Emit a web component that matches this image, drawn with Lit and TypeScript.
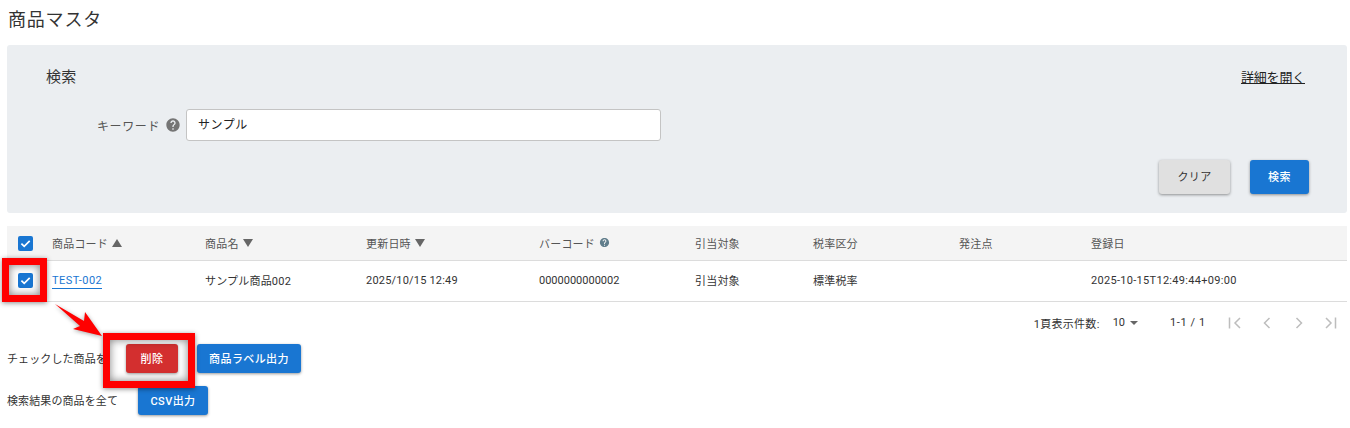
import { LitElement, html, css, svg } from "lit";
import { customElement } from "lit/decorators.js";

const help = (size: number, color: string) => html`<svg width=${size} height=${size} viewBox="0 0 24 24" style="flex:none"><path fill=${color} d="M12 2C6.48 2 2 6.48 2 12s4.48 10 10 10 10-4.48 10-10S17.52 2 12 2zm1 17h-2v-2h2v2zm2.07-7.75l-.9.92C13.45 12.9 13 13.5 13 15h-2v-.5c0-1.1.45-2.1 1.17-2.83l1.24-1.26c.37-.36.59-.86.59-1.41 0-1.1-.9-2-2-2s-2 .9-2 2H8c0-2.21 1.79-4 4-4s4 1.79 4 4c0 .88-.36 1.68-.93 2.25z"/></svg>`;

const check = html`<span class="cb"><svg width="15" height="15" viewBox="0 0 15 15"><path d="M3.4 7.600 6.200 10.300 11.700 4.900" fill="none" stroke="#fff" stroke-width="1.7"/></svg></span>`;

const up = html`<svg class="sort" width="10" height="8" viewBox="0 0 10 8"><path d="M5 0 10 8H0z"/></svg>`;
const down = html`<svg class="sort" width="10" height="8" viewBox="0 0 10 8"><path d="M0 0H10L5 8z"/></svg>`;

const pager = (d: string) => svg`<svg width="14" height="14" viewBox="0 0 14 14"><path d=${d} fill="none" stroke="#bdbdbd" stroke-width="1.5"/></svg>`;

@customElement("app-root")
export class AppRoot extends LitElement {
  static styles = css`
    :host {
      display: block;
      position: relative;
      width: 1350px;
      height: 428px;
      overflow: hidden;
      background: #fff;
      color: #333;
      font-family: Roboto, "Noto Sans CJK JP", sans-serif;
      font-size: 11px;
      letter-spacing: 0.2px;
    }
    .page { padding: 0 3px 0 7px; display: flex; flex-direction: column; }
    h1 { margin: 0; height: 45px; padding-left: 1px; font-size: 18px; font-weight: 400; line-height: 39px; letter-spacing: 0.8px; color: #333; }
    .panel { height: 168px; box-sizing: border-box; background: #ebeef1; border-radius: 3px; padding: 18px 38px 18px 39px; display: flex; flex-direction: column; }
    .panel-top { display: flex; justify-content: space-between; height: 24px; align-items: center; }
    .panel-top h2 { margin: 0; font-size: 15px; font-weight: 400; letter-spacing: 0.3px; }
    .open { font-size: 13px; letter-spacing: -0.2px; color: #222; text-decoration: underline; margin-right: 4px; margin-top: 3px; }
    .field { display: flex; align-items: center; margin-top: 22px; padding-left: 51px; }
    .field label { font-size: 12px; color: #555; letter-spacing: 0.6px; display: flex; align-items: center; gap: 5px; }
    .input { width: 475px; height: 32px; box-sizing: border-box; margin-left: 5px; background: #fff; border: 1px solid #c4c4c4; border-radius: 3px; padding-left: 11px; font-size: 12px; line-height: 31px; color: #222; letter-spacing: 0.5px; }
    .actions { display: flex; justify-content: flex-end; gap: 20px; margin-top: 19px; }
    .btn { box-sizing: border-box; height: 29px; display: inline-flex; align-items: center; justify-content: center; border-radius: 3px; background: #1976d2; color: #fff; font-size: 11px; font-weight: 500; letter-spacing: 0.4px; box-shadow: 0 1px 3px rgba(0,0,0,.4); padding-bottom: 1px; }
    .actions .btn { height: 34px; padding-bottom: 2px; }
    .btn.clear { background: #e0e0e0; color: #333; width: 71px; font-weight: 400; }
    .btn.search { width: 59px; }
    .btn.del { background: #d32f2f; width: 52px; }
    .btn.label { width: 104px; }
    .btn.csv { width: 70px; }
    .row { display: grid; grid-template-columns: 45px 153px 161px 173px 156px 118px 146px 132px 1fr; align-items: center; }
    .head { margin-top: 13px; height: 35px; background: #f4f4f4; border-bottom: 1px solid #dcdcdc; color: #555; padding-bottom: 1px; box-sizing: border-box; }
    .body { height: 41px; box-sizing: border-box; border-bottom: 1px solid #dcdcdc; color: #333; padding-bottom: 2px; }
    .chk { padding-left: 11px; display: flex; padding-top: 1px; }
    .cb { width: 15px; height: 15px; display: block; border-radius: 2px; background: #1976d2; }
    .cb svg { display: block; }
    .hc { display: flex; align-items: center; gap: 4px; }
    .sort { fill: #666; }
    .link { color: #1976d2; text-decoration: none; border-bottom: 1px solid #1976d2; justify-self: start; line-height: 14px; letter-spacing: 0.5px; margin-top: 3px; }
    .code { letter-spacing: 0; }
    .stamp { letter-spacing: 0.3px; }
    .pagin { display: flex; justify-content: flex-end; align-items: center; height: 41px; padding-right: 9px; color: #333; font-size: 11px; letter-spacing: 0; }
    .per { letter-spacing: 0.3px; }
    .size { margin-left: 13px; display: flex; align-items: center; gap: 5px; }
    .caret { width: 0; height: 0; border-left: 4px solid transparent; border-right: 4px solid transparent; border-top: 4px solid #666; }
    .range { margin-left: 32px; width: 58px; letter-spacing: 0.6px; }
    .icons { display: flex; gap: 18px; }
    .bulk { display: flex; align-items: center; height: 29px; }
    .bulk.a { margin-top: 1px; }
    .bulk.b { margin-top: 13px; }
    .bulk .txt { letter-spacing: 0.1px; margin-top: -1px; }
    .bulk.a .txt { width: 119px; }
    .bulk.b .txt { width: 131px; }
    .bulk .btn.label { margin-left: 19px; }
    .mark { position: absolute; box-sizing: border-box; border: 7px solid #f00; box-shadow: 0 1px 5px rgba(0,0,0,.45), inset 0 0 8px rgba(0,0,0,.5); }
    .m1 { left: 2px; top: 258px; width: 45px; height: 44px; }
    .m2 { left: 103px; top: 333px; width: 92px; height: 55px; }
    .arrow { position: absolute; left: 50px; top: 300px; filter: drop-shadow(0 1px 2px rgba(0,0,0,.35)); }
  `;

  render() {
    return html`
      <div class="page">
        <h1>商品マスタ</h1>
        <section class="panel">
          <div class="panel-top"><h2>検索</h2><span class="open">詳細を開く</span></div>
          <div class="field">
            <label>キーワード ${help(16, "#757575")}</label>
            <div class="input">サンプル</div>
          </div>
          <div class="actions">
            <span class="btn clear">クリア</span>
            <span class="btn search">検索</span>
          </div>
        </section>
        <div class="row head">
          <div class="chk">${check}</div>
          <div class="hc">商品コード ${up}</div>
          <div class="hc">商品名 ${down}</div>
          <div class="hc">更新日時 ${down}</div>
          <div class="hc">バーコード ${help(11, "#607d8b")}</div>
          <div>引当対象</div>
          <div>税率区分</div>
          <div>発注点</div>
          <div>登録日</div>
        </div>
        <div class="row body">
          <div class="chk">${check}</div>
          <a class="link">TEST-002</a>
          <div>サンプル商品002</div>
          <div>2025/10/15 12:49</div>
          <div class="code">0000000000002</div>
          <div>引当対象</div>
          <div>標準税率</div>
          <div></div>
          <div class="stamp">2025-10-15T12:49:44+09:00</div>
        </div>
        <div class="pagin">
          <span class="per">1頁表示件数:</span>
          <span class="size">10 <i class="caret"></i></span>
          <span class="range">1-1 / 1</span>
          <span class="icons">
            ${pager("M1.500 1.500v11M12 2 7 7l5 5")}
            ${pager("M9.500 2 4.500 7l5 5")}
            ${pager("M4.500 2 9.500 7l-5 5")}
            ${pager("M2 2 7 7l-5 5M11.500 1.500v11")}
          </span>
        </div>
        <div class="bulk a"><span class="txt">チェックした商品を</span><span class="btn del">削除</span><span class="btn label">商品ラベル出力</span></div>
        <div class="bulk b"><span class="txt">検索結果の商品を全て</span><span class="btn csv">CSV出力</span></div>
      </div>
      <div class="mark m1"></div>
      <div class="mark m2"></div>
      <svg class="arrow" width="60" height="50" viewBox="0 0 60 50"><path d="M5 4 34 21 35 12 52 36 23 29 30 26z" fill="#f00"/></svg>
    `;
  }
}
